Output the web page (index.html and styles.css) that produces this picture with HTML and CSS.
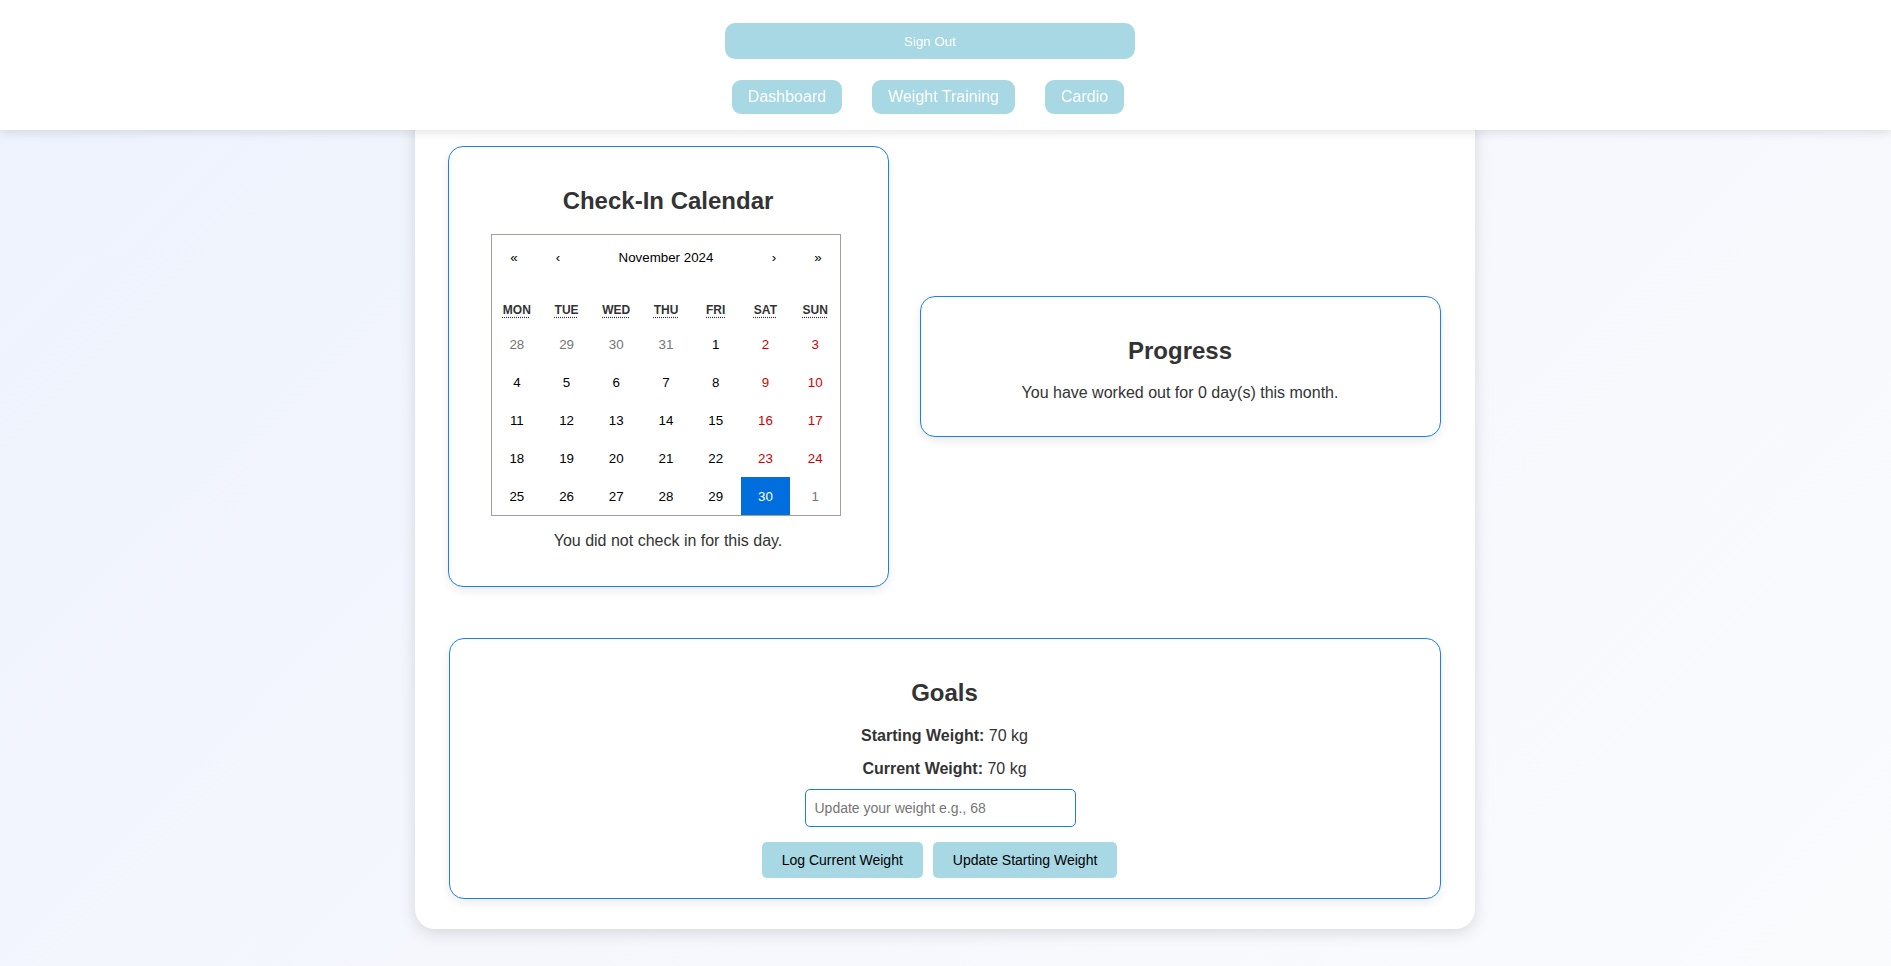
FILE: index.html
```html
<!DOCTYPE html>
<html lang="en">
<head>
<meta charset="utf-8">
<title>Dashboard</title>
<link rel="stylesheet" href="styles.css">
</head>
<body>
<header class="topbar">
  <div class="topbar-inner">
    <button class="signout">Sign Out</button>
    <nav class="nav">
      <a class="nav-btn">Dashboard</a>
      <a class="nav-btn">Weight Training</a>
      <a class="nav-btn">Cardio</a>
    </nav>
  </div>
</header>

<main class="container">
  <div class="top-row">
    <section class="card calendar-card">
      <h2>Check-In Calendar</h2>
      <div class="calendar">
        <div class="cal-nav">
          <button class="cal-arrow">«</button>
          <button class="cal-arrow">‹</button>
          <button class="cal-label">November 2024</button>
          <button class="cal-arrow">›</button>
          <button class="cal-arrow">»</button>
        </div>
        <div class="cal-weekdays">
          <div class="wd"><abbr title="Monday">Mon</abbr></div>
          <div class="wd"><abbr title="Tuesday">Tue</abbr></div>
          <div class="wd"><abbr title="Wednesday">Wed</abbr></div>
          <div class="wd"><abbr title="Thursday">Thu</abbr></div>
          <div class="wd"><abbr title="Friday">Fri</abbr></div>
          <div class="wd"><abbr title="Saturday">Sat</abbr></div>
          <div class="wd"><abbr title="Sunday">Sun</abbr></div>
        </div>
        <div class="cal-days">
          <button class="day other">28</button>
          <button class="day other">29</button>
          <button class="day other">30</button>
          <button class="day other">31</button>
          <button class="day">1</button>
          <button class="day weekend">2</button>
          <button class="day weekend">3</button>

          <button class="day">4</button>
          <button class="day">5</button>
          <button class="day">6</button>
          <button class="day">7</button>
          <button class="day">8</button>
          <button class="day weekend">9</button>
          <button class="day weekend">10</button>

          <button class="day">11</button>
          <button class="day">12</button>
          <button class="day">13</button>
          <button class="day">14</button>
          <button class="day">15</button>
          <button class="day weekend">16</button>
          <button class="day weekend">17</button>

          <button class="day">18</button>
          <button class="day">19</button>
          <button class="day">20</button>
          <button class="day">21</button>
          <button class="day">22</button>
          <button class="day weekend">23</button>
          <button class="day weekend">24</button>

          <button class="day">25</button>
          <button class="day">26</button>
          <button class="day">27</button>
          <button class="day">28</button>
          <button class="day">29</button>
          <button class="day active">30</button>
          <button class="day other">1</button>
        </div>
      </div>
      <p>You did not check in for this day.</p>
    </section>

    <section class="card progress-card">
      <h2>Progress</h2>
      <p>You have worked out for 0 day(s) this month.</p>
    </section>
  </div>

  <section class="card goals-card">
    <h2>Goals</h2>
    <p class="stat"><strong>Starting Weight:</strong> 70 kg</p>
    <p class="stat last"><strong>Current Weight:</strong> 70 kg</p>
    <div class="input-row">
      <input class="weight-input" type="text" placeholder="Update your weight e.g., 68">
    </div>
    <div class="btn-row">
      <button class="goal-btn">Log Current Weight</button>
      <button class="goal-btn">Update Starting Weight</button>
    </div>
  </section>
</main>
</body>
</html>
```

FILE: styles.css
```css
* {
  box-sizing: border-box;
}

html, body {
  margin: 0;
  padding: 0;
}

body {
  font-family: "Liberation Sans", Arial, Helvetica, sans-serif;
  color: #333;
  background: linear-gradient(135deg, #edf2fd 0%, #f5f7fd 50%, #fafbfd 100%);
  min-height: 966px;
}

/* ---------- header ---------- */
.topbar {
  position: fixed;
  top: 0;
  left: 0;
  right: 0;
  height: 130px;
  background: #ffffff;
  box-shadow: 0 2px 10px rgba(0, 0, 0, 0.12);
  z-index: 10;
}

.topbar-inner {
  display: flex;
  flex-direction: column;
  align-items: center;
  padding: 23px 31px 0 0;
}

.signout {
  width: 410px;
  height: 36px;
  border: none;
  border-radius: 10px;
  background: #a8d8e4;
  color: #ffffff;
  font-family: "Liberation Sans", Arial, sans-serif;
  font-size: 13.333px;
  padding: 0;
}

.nav {
  display: flex;
  gap: 30px;
  margin-top: 21px;
  margin-right: 4px;
}

.nav-btn {
  display: block;
  height: 34px;
  line-height: 34px;
  padding: 0 16px;
  border-radius: 9px;
  background: #a8d8e4;
  color: #ffffff;
  font-size: 16px;
}

/* ---------- container ---------- */
.container {
  width: 1060px;
  margin: 96px auto 38px;
  padding: 50px 33px 30px 33px;
  background: #ffffff;
  border-radius: 20px;
  box-shadow: 0 4px 16px rgba(0, 0, 0, 0.13);
  position: relative;
  left: -1px;
}

.top-row {
  display: flex;
  align-items: center;
  gap: 31px;
}

.card {
  background: #ffffff;
  border: 1px solid #1a7ff0;
  border-radius: 15px;
  padding: 20px;
  text-align: center;
  box-shadow: 0 4px 10px rgba(0, 0, 0, 0.08);
}

.card h2 {
  font-size: 24px;
  font-weight: bold;
  color: #333;
  margin: 20px 0 19.9px;
  line-height: 27.6px;
}

.card p {
  font-size: 16px;
  line-height: 18.4px;
  margin: 16px 0;
  color: #333;
}

.calendar-card {
  flex: 0 0 441px;
  width: 441px;
  height: 441px;
  display: flex;
  flex-direction: column;
  align-items: center;
  padding: 20px 0;
}

.progress-card {
  flex: 1 1 auto;
  height: 141px;
  margin-right: 1px;
}

.progress-card p {
  margin-bottom: 0;
}

/* ---------- calendar ---------- */
.calendar {
  width: 350px;
  border: 1px solid #a0a096;
  background: #fff;
  font-family: "Liberation Sans", Arial, Helvetica, sans-serif;
  margin-left: -4px;
}

.cal-nav {
  display: flex;
  height: 44px;
  margin-bottom: 16px;
}

.cal-nav button {
  background: none;
  border: none;
  padding: 0;
  color: #000;
  font-family: "Liberation Sans", Arial, sans-serif;
  font-size: 13.333px;
}

.cal-arrow {
  min-width: 44px;
  width: 44px;
}

.cal-label {
  flex: 1;
}

.cal-weekdays {
  display: grid;
  grid-template-columns: repeat(7, 1fr);
  height: 30px;
  text-transform: uppercase;
  font-size: 12px;
  font-weight: bold;
}

.wd {
  display: flex;
  align-items: center;
  justify-content: center;
}

.wd abbr {
  color: #333;
  text-decoration: underline dotted;
  text-underline-offset: 2px;
}

.cal-days {
  display: grid;
  grid-template-columns: repeat(7, 1fr);
}

.day {
  height: 38px;
  border: none;
  background: none;
  padding: 0;
  font-family: "Liberation Sans", Arial, sans-serif;
  font-size: 13.333px;
  color: #000;
}

.day.weekend {
  color: #d10000;
}

.day.other {
  color: #757575;
}

.day.active {
  background: #006edc;
  color: #ffffff;
}

.calendar-card p {
  margin: 16px 0 0;
}

/* ---------- goals ---------- */
.goals-card {
  margin-top: 51px;
  width: 992px;
  margin-left: 1px;
  padding-bottom: 20px;
}

.goals-card h2 {
  margin-bottom: 20.5px;
}

.goals-card p.stat {
  margin: 0 0 14.6px;
}

.goals-card p.stat.last {
  margin-bottom: 10.5px;
}

.input-row {
  display: flex;
  justify-content: center;
}

.weight-input {
  width: 271px;
  height: 38px;
  border: 1px solid #1a7ff0;
  border-radius: 5px;
  padding: 0 9px;
  margin-right: 9px;
  font-family: "Liberation Sans", Arial, sans-serif;
  font-size: 14px;
  color: #333;
  background: #fff;
  outline: none;
}

.weight-input::placeholder {
  color: #757575;
}

.btn-row {
  display: flex;
  justify-content: center;
  margin-top: 15px;
}

.goal-btn {
  height: 36px;
  padding: 0 20px;
  border: none;
  border-radius: 5px;
  background: #a8d8e4;
  color: #000;
  font-family: "Liberation Sans", Arial, sans-serif;
  font-size: 14px;
  margin-right: 10px;
}
```
